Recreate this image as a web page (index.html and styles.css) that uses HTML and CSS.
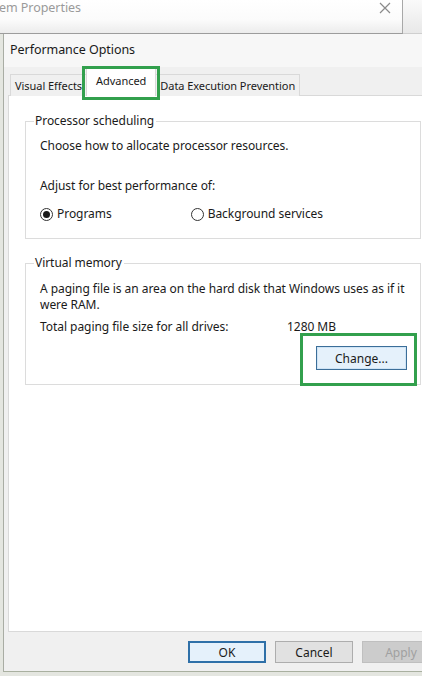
FILE: index.html
```html
<!DOCTYPE html>
<html>
<head>
<meta charset="utf-8">
<link rel="stylesheet" href="styles.css">
</head>
<body>
<div class="screen">
  <div class="backbar">
    <div class="backmain">
      <span class="backtitle">em Properties</span>
      <svg class="close" width="12" height="12" viewBox="0 0 12 12"><path d="M1 1L11 11M11 1L1 11" stroke="#8a8a8a" stroke-width="1.2" fill="none"/></svg>
    </div>
    <div class="backside"></div>
  </div>
  <div class="dialog">
    <div class="dtitle">Performance Options</div>
    <div class="body">
      <div class="tabs">
        <div class="tab">Visual Effects</div>
        <div class="tab active">Advanced<span class="hl hl-tab"></span></div>
        <div class="tab">Data Execution Prevention</div>
      </div>
      <div class="panel">
        <div class="group g1">
          <div class="legend">Processor scheduling</div>
          <p class="line">Choose how to allocate processor resources.</p>
          <p class="line l2">Adjust for best performance of:</p>
          <div class="radios">
            <label class="radio"><span class="dot on"></span>Programs</label>
            <label class="radio r2"><span class="dot"></span>Background services</label>
          </div>
        </div>
        <div class="group g2">
          <div class="legend">Virtual memory</div>
          <p class="line para">A paging file is an area on the hard disk that Windows uses as if it were RAM.</p>
          <div class="total"><span class="tlabel">Total paging file size for all drives:</span><span class="tval">1280 MB</span></div>
          <div class="changerow">
            <div class="changewrap"><span class="hl hl-change"></span><button class="btn change">Change...</button></div>
          </div>
        </div>
      </div>
      <div class="footer">
        <button class="btn ok">OK</button>
        <button class="btn">Cancel</button>
        <button class="btn disabled">Apply</button>
      </div>
    </div>
  </div>
</div>
</body>
</html>
```

FILE: styles.css
```css
* { box-sizing: border-box; }
html, body { margin: 0; padding: 0; }
body {
  width: 422px;
  height: 676px;
  overflow: hidden;
  background: #e4e6e0;
  font-family: "Noto Sans", "Open Sans", sans-serif;
  font-size: 12px;
  letter-spacing: -0.05px;
  color: #1a1a1a;
}
.screen { width: 422px; height: 676px; overflow: hidden; }

.backbar {
  display: flex;
  height: 34px;
}
.backmain {
  width: 403px;
  height: 34px;
  display: flex;
  justify-content: space-between;
  align-items: flex-start;
  border-right: 1px solid #a8a8a8;
  border-bottom: 1px solid #9c9c9c;
  background: linear-gradient(#ffffff 0%, #fbfbfb 60%, #ececec 100%);
}
.backtitle {
  color: #9a9a9a;
  font-size: 12.5px;
  margin-left: -1px;
  line-height: 16px;
}
.close { margin: 2px 11px 0 0; }
.backside {
  flex: 1;
  background: linear-gradient(#fafafa, #e8e8e8);
  border-bottom: 1px solid #cfcfcf;
}

.dialog {
  margin-left: 3px;
  width: 440px;
  height: 638px;
  border-left: 1px solid #a9ada4;
  border-bottom: 1px solid #a9b0a0;
  background: #f0f0f0;
  display: flex;
  flex-direction: column;
}
.dtitle {
  height: 33px;
  padding: 7px 0 0 6px;
  background: #f7f7f7;
  font-size: 12.5px;
}
.body {
  flex: 1;
  display: flex;
  flex-direction: column;
  padding: 0 0 0 4px;
}
.tabs {
  display: flex;
  align-items: flex-end;
  height: 29px;
  padding-left: 2px;
  position: relative;
  z-index: 2;
  font-size: 11px;
}
.tab {
  height: 22px;
  padding: 3px 4px 0 4px;
  border: 1px solid #d9d9d9;
  border-bottom: none;
  background: #f0f0f0;
  white-space: nowrap;
}
.tab.active {
  position: relative;
  height: 29px;
  padding: 5px 9px 0 9px;
  background: #ffffff;
  margin: 0 -1px;
  z-index: 3;
}
.hl {
  position: absolute;
  border: 3px solid #32a04d;
  pointer-events: none;
}
.hl-tab { left: -5px; top: -2px; right: -5px; bottom: -4px; }

.panel {
  height: 537px;
  background: #ffffff;
  border: 1px solid #d9d9d9;
  margin-top: -1px;
  padding: 25px 0 0 16px;
  display: flex;
  flex-direction: column;
  gap: 24px;
}
.group {
  position: relative;
  width: 396px;
  border: 1px solid #dcdcdc;
  padding: 16px 0 0 14px;
}
.g1 { height: 118px; }
.g2 { height: 122px; padding-top: 17px; }
.legend {
  position: absolute;
  left: 8px;
  top: -9px;
  background: #fff;
  padding: 0 2px 0 1px;
  line-height: 16px;
}
.line { margin: 0; line-height: 16px; }
.l2 { margin-top: 24px; }
.radios { display: flex; margin-top: 12px; }
.radio { display: flex; align-items: center; gap: 4px; line-height: 16px; }
.r2 { margin-left: 79px; }
.dot {
  width: 13px; height: 13px;
  border: 1px solid #333;
  border-radius: 50%;
  display: inline-flex;
  align-items: center;
  justify-content: center;
}
.dot.on::after {
  content: "";
  width: 7px; height: 7px;
  border-radius: 50%;
  background: #1a1a1a;
}
.para { width: 372px; }
.total { display: flex; margin-top: 6px; line-height: 16px; }
.tlabel { width: 247px; }
.changerow { display: flex; justify-content: flex-end; padding-right: 13px; margin-top: 11px; }
.changewrap { position: relative; }
.hl-change { left: -16px; top: -13px; right: -10px; bottom: -16px; }

.btn {
  font-family: inherit;
  font-size: 12px;
  color: #1a1a1a;
  height: 22px;
  border: 1px solid #adadad;
  background: #e1e1e1;
  padding: 0;
}
.change {
  width: 91px;
  height: 24px;
  background: #e5f1fb;
  border: 1px solid #3b6e99;
  box-shadow: inset 0 0 0 1px #cfe4f5;
}
.footer {
  flex: 1;
  display: flex;
  gap: 9px;
  padding: 9px 0 0 180px;
}
.footer .btn { width: 78px; }
.ok { border: 2px solid #2f70a8; background: #e5f1fb; }
.disabled { color: #a0a0a0; background: #cccccc; border-color: #bfbfbf; }
```
